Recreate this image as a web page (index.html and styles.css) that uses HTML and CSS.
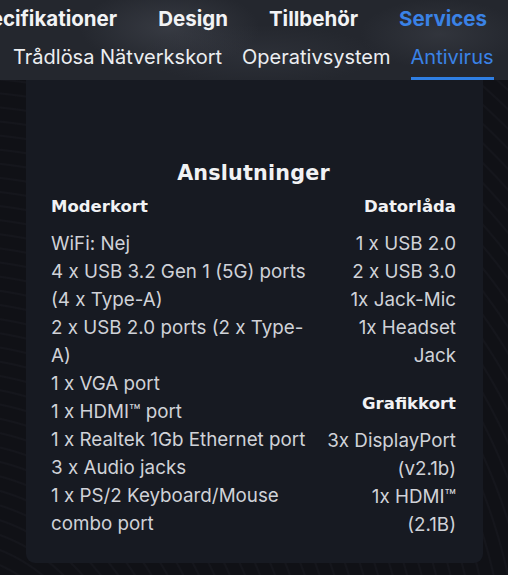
FILE: index.html
```html
<!DOCTYPE html>
<html lang="sv">
<head>
<meta charset="utf-8">
<link rel="stylesheet" href="styles.css">
</head>
<body>
<div class="page">
  <header class="nav">
    <div class="nav-row nav-main">
      <span class="nav-item">Specifikationer</span>
      <span class="nav-item">Design</span>
      <span class="nav-item">Tillbehör</span>
      <span class="nav-item active">Services</span>
    </div>
    <div class="nav-row nav-sub">
      <span class="sub-item">Trådlösa Nätverkskort</span>
      <span class="sub-item">Operativsystem</span>
      <span class="sub-item active">Antivirus</span>
    </div>
  </header>
  <main class="card">
    <h2 class="title">Anslutninger</h2>
    <div class="cols">
      <section class="col left">
        <h3 class="head">Moderkort</h3>
        <ul class="list">
          <li>WiFi: Nej</li>
          <li>4 x USB 3.2 Gen 1 (5G) ports (4 x Type-A)</li>
          <li>2 x USB 2.0 ports (2 x Type-A)</li>
          <li>1 x VGA port</li>
          <li>1 x HDMI™ port</li>
          <li>1 x Realtek 1Gb Ethernet port</li>
          <li>3 x Audio jacks</li>
          <li>1 x PS/2 Keyboard/Mouse combo port</li>
        </ul>
      </section>
      <section class="col right">
        <h3 class="head">Datorlåda</h3>
        <ul class="list">
          <li>1 x USB 2.0</li>
          <li>2 x USB 3.0</li>
          <li>1x Jack-Mic</li>
          <li>1x Headset Jack</li>
        </ul>
        <h3 class="head second">Grafikkort</h3>
        <ul class="list">
          <li>3x DisplayPort (v2.1b)</li>
          <li>1x HDMI™ (2.1B)</li>
        </ul>
      </section>
    </div>
  </main>
</div>
</body>
</html>
```

FILE: styles.css
```css
* { box-sizing: border-box; }
html, body { margin: 0; padding: 0; }
body {
  width: 508px;
  height: 575px;
  overflow: hidden;
  background: #0e0f14;
  font-family: Inter, "Noto Sans", sans-serif;
  color: #d4d6db;
}
.page {
  height: 575px;
  background:
    repeating-radial-gradient(circle at -60px 700px, #101116 0 6px, #15161c 7px 8px, #101116 9px 14px),
    #0f1015;
}
.nav {
  height: 80px;
  background:
    radial-gradient(ellipse 90px 40px at 170px 28px, rgba(90, 94, 104, 0.35), transparent),
    radial-gradient(ellipse 80px 35px at 440px 34px, rgba(90, 94, 104, 0.25), transparent),
    radial-gradient(ellipse 120px 30px at 260px 55px, rgba(70, 74, 84, 0.25), transparent),
    #24272e;
}
.nav-row {
  display: flex;
  white-space: nowrap;
  overflow: hidden;
}
.nav-main {
  justify-content: flex-end;
  gap: 41px;
  padding-right: 21px;
  height: 36px;
  align-items: center;
  font-weight: 700;
  font-size: 20.5px;
  color: #f2f3f5;
}
.nav-main .active { color: #3a82e6; }
.nav-sub {
  gap: 20px;
  padding-left: 13px;
  height: 44px;
  align-items: flex-start;
  font-size: 20px;
  color: #eceef1;
}
.sub-item {
  padding-top: 9px;
  height: 44px;
}
.sub-item.active {
  color: #3a82e6;
  border-bottom: 3px solid #2f7fe4;
}
.card {
  margin: 0 25px 0 26px;
  height: 483px;
  background: #171a22;
  border-radius: 0 0 9px 9px;
  padding: 81px 27px 0 25px;
}
.title {
  margin: 0 0 11px;
  text-align: center;
  font-family: "DejaVu Sans", sans-serif;
  font-weight: 700;
  font-size: 20.7px;
  line-height: 24px;
  letter-spacing: 0.2px;
  color: #f1f2f4;
}
.cols {
  display: grid;
  grid-template-columns: 1fr 129px;
  gap: 16px;
}
.head {
  margin: 0 0 12px;
  font-family: "DejaVu Sans", sans-serif;
  font-weight: 700;
  font-size: 16.5px;
  color: #f1f2f4;
  line-height: 22px;
}
.head.second { margin-top: 23px; }
.right { text-align: right; }
.list {
  list-style: none;
  margin: 0;
  padding: 0;
  font-size: 18.8px;
  line-height: 28px;
  color: #d0d2d8;
}
```
